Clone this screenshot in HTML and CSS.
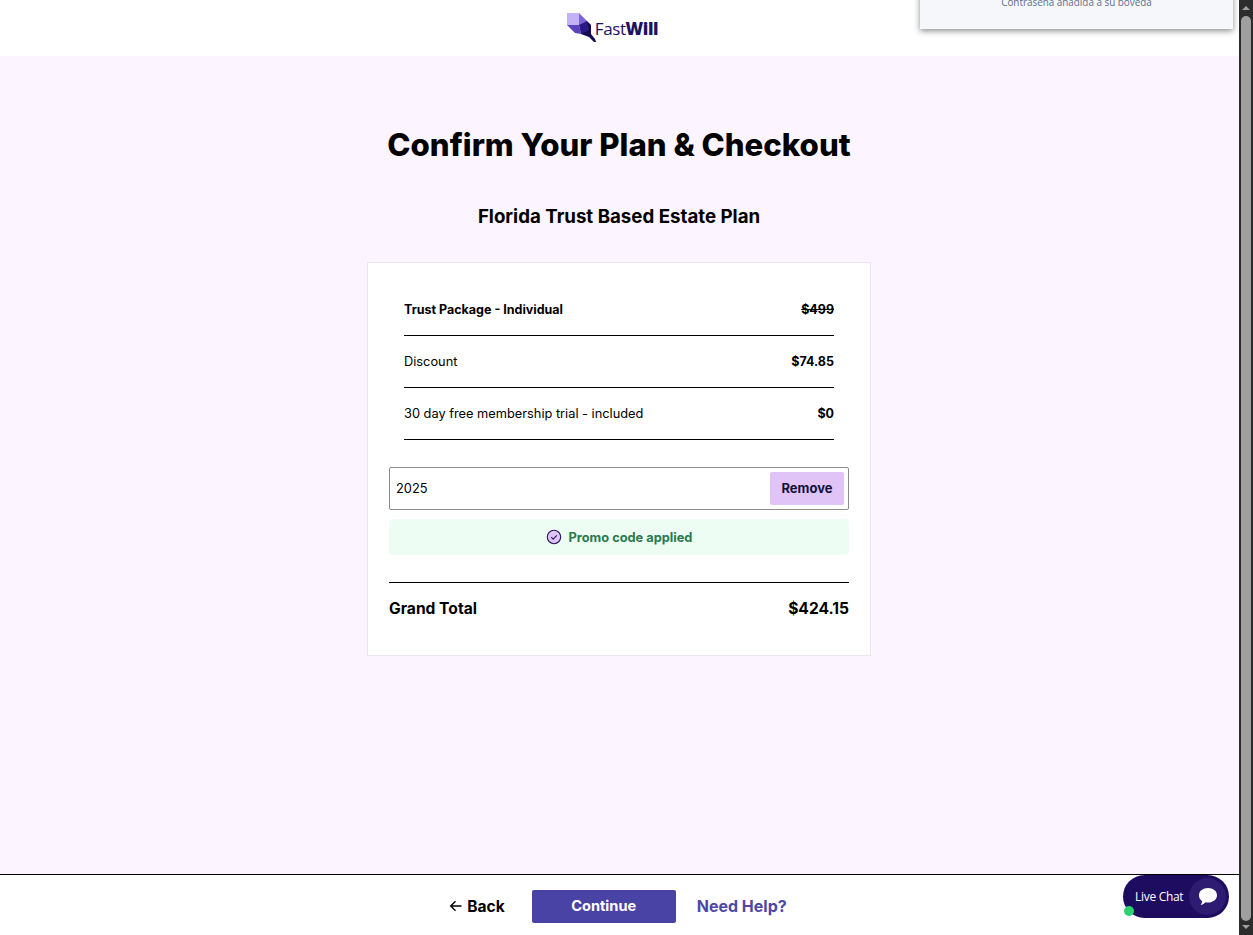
FILE: index.html
```html
<!DOCTYPE html>
<html lang="en">
<head>
    <meta charset="UTF-8">
    <meta name="viewport" content="width=device-width, initial-scale=1.0">
    <title>Checkout</title>
    <link rel="stylesheet" href="styles.css">
</head>
<body>

<div class="page">
    <header class="topbar">
        <div class="logo">
            <svg class="logo-mark" width="31" height="31" viewBox="0 0 31 31">
                <polygon points="0,1 12,1 12,13 0,13" fill="#c3b2f6"/>
                <polygon points="12,1 20,9 20,15 12,13" fill="#7d63d8"/>
                <polygon points="0,13 12,13 14,22 8,21" fill="#5a43bd"/>
                <polygon points="12,13 20,9 24,15 24,22 14,22" fill="#2a1a86"/>
                <polygon points="20,9 24,13 24,22 28,27 29,30 27,30 22,25 14,22 22,18" fill="#160a55"/>
            </svg>
            <span class="logo-text">Fast<b>Will</b></span>
        </div>
    </header>

    <main class="content">
        <h1>Confirm Your Plan &amp; Checkout</h1>
        <h2>Florida Trust Based Estate Plan</h2>

        <section class="card">
            <div class="rows">
                <div class="row">
                    <span class="strong">Trust Package - Individual</span>
                    <span class="strong"><s>$499</s></span>
                </div>
                <div class="row">
                    <span>Discount</span>
                    <span class="strong">$74.85</span>
                </div>
                <div class="row">
                    <span>30 day free membership trial - included</span>
                    <span class="strong">$0</span>
                </div>
            </div>

            <div class="promo">
                <span class="promo-code">2025</span>
                <button class="remove" type="button">Remove</button>
            </div>
            <div class="promo-msg">
                <svg width="16" height="16" viewBox="0 0 16 16">
                    <circle cx="8" cy="8" r="6.7" fill="#e0c3f7" stroke="#2b1a5e" stroke-width="1.1"/>
                    <path d="M5.2 8.2l2 1.9 3.6-3.8" fill="none" stroke="#2b1a5e" stroke-width="1.1"/>
                </svg>
                <span>Promo code applied</span>
            </div>

            <div class="total">
                <span>Grand Total</span>
                <span>$424.15</span>
            </div>
        </section>
    </main>

    <footer class="bottombar">
        <a class="back" href="#">
            <svg width="14" height="12" viewBox="0 0 14 12">
                <path d="M12.5 6H2M6.500 1.200L1.700 6l4.800 4.800" fill="none" stroke="#000" stroke-width="1.4"/>
            </svg>
            <span>Back</span>
        </a>
        <button class="continue" type="button">Continue</button>
        <a class="help" href="#">Need Help?</a>
    </footer>

    <div class="toast">Contraseña añadida a su bóveda</div>

    <div class="chat">
        <span class="chat-label">Live Chat</span>
        <span class="chat-icon">
            <svg width="20" height="19" viewBox="0 0 20 19">
                <path d="M10 1c5 0 9 2.900 9 7.200s-4 7.300-9 7.300c-.9 0-1.700-.1-2.500-.3C6.200 16.600 4.400 17.600 2.500 18c1-1.200 1.500-2.400 1.600-3.800C2.200 12.900 1 10.700 1 8.200 1 3.900 5 1 10 1z" fill="#fff"/>
            </svg>
        </span>
        <span class="chat-dot"></span>
    </div>
</div>

<div class="scrollbar">
    <span class="arrow-up"></span>
    <span class="thumb"></span>
    <span class="arrow-down"></span>
</div>

</body>
</html>
```
FILE: styles.css
```css
/* Page frame */
html, body {
    height: 100%;
}
body {
    margin: 0;
    display: flex;
    overflow: hidden;
    font-family: Inter, "Liberation Sans", sans-serif;
    color: #000;
    background: #fff;
}
.page {
    position: relative;
    flex: 1;
    display: flex;
    flex-direction: column;
    overflow: hidden;
}

/* Header */
.topbar {
    height: 56px;
    flex-shrink: 0;
    display: flex;
    justify-content: center;
    background: #fff;
}
.logo {
    display: flex;
    align-items: flex-start;
    margin-left: -14px;
    padding-top: 12px;
}
.logo-mark {
    margin-right: -3px;
}
.logo-text {
    margin-top: 6px;
    font-family: "Open Sans", sans-serif;
    font-size: 17px;
    line-height: 22px;
    letter-spacing: -0.4px;
    color: #1d1160;
}
.logo-text b {
    font-weight: 800;
}

/* Main content */
.content {
    flex: 1;
    display: flex;
    flex-direction: column;
    align-items: center;
    padding-right: 1px;
    background: #fcf4ff;
}
.content h1 {
    margin: 71px 0 0;
    font-size: 31.2px;
    line-height: 36px;
    font-weight: 800;
}
.content h2 {
    margin: 42px 0 0;
    font-size: 18.7px;
    line-height: 24px;
    font-weight: 700;
}

/* Summary card */
.card {
    width: 460px;
    height: 371px;
    margin-top: 33px;
    padding: 21px 21px 0;
    background: #fff;
    border: 1px solid #ece4f2;
}
.rows {
    padding: 0 15px;
}
.row {
    height: 51px;
    display: flex;
    justify-content: space-between;
    align-items: center;
    border-bottom: 1px solid #000;
    font-size: 12.8px;
}
.strong {
    font-size: 12.5px;
    font-weight: 700;
}
.promo {
    height: 41px;
    margin-top: 27px;
    padding: 0 4px 0 6px;
    display: flex;
    justify-content: space-between;
    align-items: center;
    border: 1px solid #8c8c8c;
    border-radius: 2px;
}
.promo-code {
    font-size: 12.8px;
}
.remove {
    width: 74px;
    height: 33px;
    padding: 0 0 2px;
    border: none;
    border-radius: 2px;
    background: #e0c3f7;
    color: #14103a;
    font-family: inherit;
    font-size: 13px;
    font-weight: 700;
}
.promo-msg {
    height: 36px;
    margin-top: 9px;
    display: flex;
    justify-content: center;
    align-items: center;
    gap: 7px;
    border-radius: 4px;
    background: #eefdf3;
    color: #2a7a4f;
    font-size: 12.8px;
    font-weight: 700;
}
.total {
    height: 50px;
    margin-top: 27px;
    padding-bottom: 2px;
    display: flex;
    justify-content: space-between;
    align-items: center;
    border-top: 1px solid #000;
    font-size: 15.6px;
    font-weight: 700;
}

/* Footer actions */
.bottombar {
    height: 58px;
    flex-shrink: 0;
    display: flex;
    justify-content: center;
    align-items: center;
    border-top: 1px solid #000;
    background: #fff;
    padding: 2px 3px 0 0;
}
.back {
    display: flex;
    align-items: center;
    gap: 4px;
    color: #000;
    font-size: 15.5px;
    font-weight: 700;
    text-decoration: none;
}
.continue {
    width: 144px;
    height: 33px;
    margin: 0 21px 0 27px;
    padding: 0;
    border: none;
    border-radius: 2px;
    background: #4a43a6;
    color: #fff;
    font-family: inherit;
    font-size: 14.6px;
    font-weight: 700;
}
.help {
    color: #4f48a3;
    font-size: 16px;
    font-weight: 700;
    text-decoration: none;
}

/* Floating things */
.toast {
    position: absolute;
    top: -24px;
    left: 920px;
    width: 313px;
    height: 53px;
    box-sizing: border-box;
    padding-top: 20px;
    text-align: center;
    background: #f6f7fb;
    box-shadow: 0 2px 6px rgba(0, 0, 0, 0.45);
    color: #5f6f8a;
    font-family: "Open Sans", sans-serif;
    font-size: 9.9px;
    line-height: 12px;
}
.chat {
    position: absolute;
    left: 1123px;
    top: 875px;
    width: 106px;
    height: 43px;
    box-sizing: border-box;
    padding: 0 3px 0 12px;
    display: flex;
    justify-content: space-between;
    align-items: center;
    border-radius: 22px;
    background: #1e0c60;
}
.chat-label {
    color: #fff;
    font-family: "Open Sans", sans-serif;
    font-size: 12px;
    letter-spacing: -0.3px;
}
.chat-icon {
    width: 37px;
    height: 37px;
    display: flex;
    justify-content: center;
    align-items: center;
    border-radius: 50%;
    background: #2e1c72;
}
.chat-dot {
    position: absolute;
    left: 1px;
    bottom: 2px;
    width: 10px;
    height: 10px;
    border-radius: 50%;
    background: #2bd36f;
}

/* Window scrollbar */
.scrollbar {
    width: 14px;
    flex-shrink: 0;
    display: flex;
    flex-direction: column;
    align-items: center;
    background: #2c2c2c;
}
.thumb {
    flex: 1;
    width: 10px;
    margin: 6px 0 4px;
    border-radius: 5px;
    background: #9f9f9f;
}
.arrow-up, .arrow-down {
    width: 0;
    height: 0;
    margin-top: 6px;
    border-left: 4px solid transparent;
    border-right: 4px solid transparent;
}
.arrow-up {
    border-bottom: 4px solid #9f9f9f;
}
.arrow-down {
    margin: 0 0 6px;
    border-top: 4px solid #9f9f9f;
}
```
